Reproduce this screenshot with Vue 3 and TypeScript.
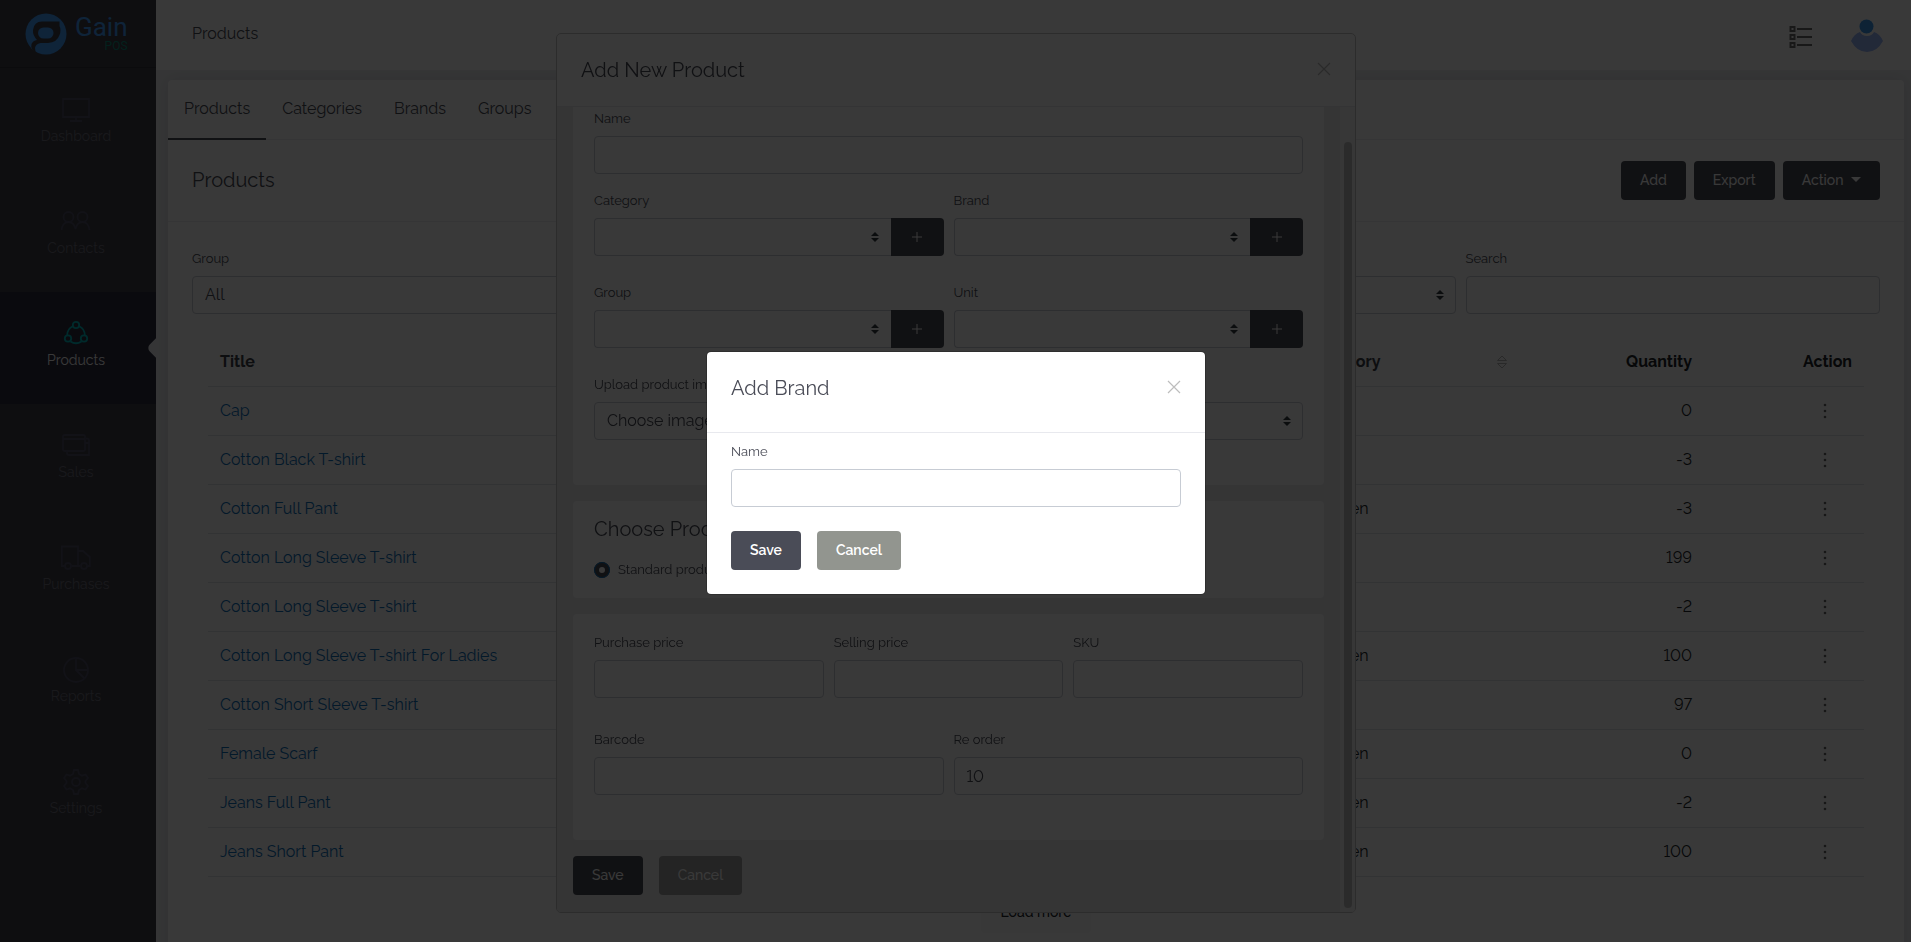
<script setup lang="ts">
import { ref } from 'vue'

interface Product { title: string; category: string; quantity: number }

const navItems = ['Dashboard', 'Contacts', 'Products', 'Sales', 'Purchases', 'Reports', 'Settings']
const activeNav = ref('Products')
const tabs = ['Products', 'Categories', 'Brands', 'Groups']
const activeTab = ref('Products')

const filters = [
  { id: 'f-group', label: 'Group' },
  { id: 'f-brand', label: 'Brand' },
  { id: 'f-category', label: 'Category' },
]

const products: Product[] = [
  { title: 'Cap', category: 'Men', quantity: 0 },
  { title: 'Cotton Black T-shirt', category: 'Men', quantity: -3 },
  { title: 'Cotton Full Pant', category: 'Women', quantity: -3 },
  { title: 'Cotton Long Sleeve T-shirt', category: 'Men', quantity: 199 },
  { title: 'Cotton Long Sleeve T-shirt', category: 'Men', quantity: -2 },
  { title: 'Cotton Long Sleeve T-shirt For Ladies', category: 'Women', quantity: 100 },
  { title: 'Cotton Short Sleeve T-shirt', category: 'Men', quantity: 97 },
  { title: 'Female Scarf', category: 'Women', quantity: 0 },
  { title: 'Jeans Full Pant', category: 'Women', quantity: -2 },
  { title: 'Jeans Short Pant', category: 'Women', quantity: 100 },
]

const addableSelects = ['Category', 'Brand', 'Group', 'Unit']
const priceFields = ['Purchase price', 'Selling price', 'SKU']
const brandName = ref('')
const reorder = ref('10')
const productType = ref('standard')
</script>

<template>
  <div class="app">
    <aside class="sidebar">
      <a class="logo" href="#" aria-label="Gain POS">
        <svg class="logo-mark" viewBox="0 0 42 42" aria-hidden="true">
          <circle cx="21" cy="21" r="20.5" class="logo-disc" />
          <path class="logo-cut" d="M12 41 Q5 36 6.500 31 Q8 27.500 12 27 Q7.500 22 8 17 Q9 8.500 17 8.500 H34.500 V13 Q36.500 17 34.500 22 Q32 29.500 23 30 H15.500 Q10.500 31 10 35 Q10 39 12 41Z" />
          <rect x="13" y="14.500" width="15.500" height="11" rx="5.500" class="logo-disc" />
        </svg>
        <span class="logo-text"><span class="logo-gain">Gain</span><span class="logo-pos">POS</span></span>
      </a>
      <nav class="nav">
        <a v-for="item in navItems" :key="item" href="#" class="nav-item" :class="{ active: item === activeNav }" @click.prevent="activeNav = item">
          <svg class="nav-icon" viewBox="0 0 30 28" aria-hidden="true">
            <template v-if="item === 'Dashboard'">
              <path d="M2 4H28V22H2ZM15 22V26M9 26H21" />
            </template>
            <template v-else-if="item === 'Contacts'">
              <circle cx="7.500" cy="10" r="5" /><circle cx="21.500" cy="10" r="5" />
              <path d="M0.500 23C1 18 4 15 7.500 15S13.500 18 14.500 22C15.500 18 18 15 21.500 15S28 18 28.500 23" />
            </template>
            <template v-else-if="item === 'Products'">
              <circle cx="15" cy="6" r="3.200" /><circle cx="7" cy="19.500" r="3.200" /><circle cx="23" cy="19.500" r="3.200" />
              <path d="M11.800 7.200A10 10 0 0 0 6.200 16.300M18.200 7.200A10 10 0 0 1 23.800 16.300M9.500 22.500Q15 26 20.500 22.500" />
            </template>
            <template v-else-if="item === 'Sales'">
              <rect x="2" y="4" width="22" height="16" rx="1.500" /><path d="M2 8H24M6 20V22Q6 24 8 24H28V9Q28 7.500 25 7.500M24 12H28" />
            </template>
            <template v-else-if="item === 'Purchases'">
              <path d="M4 23H0.800V3.500H17V23M10.500 23H19.500M17 8H22L28.800 14V23H26" /><circle cx="7" cy="23" r="3" /><circle cx="23" cy="23" r="3" />
            </template>
            <template v-else-if="item === 'Reports'">
              <circle cx="15" cy="15" r="12" /><path d="M15 3V15H27M15 15L23.500 23.500" />
            </template>
            <template v-else>
              <circle cx="15" cy="15" r="4" />
              <path d="M13 3H17L18 7L21 8.700L24.500 7.500L27 11L24.500 14V16L27 19L24.500 22.500L21 21.300L18 23L17 27H13L12 23L9 21.300L5.500 22.500L3 19L5.500 16V14L3 11L5.500 7.500L9 8.700L12 7Z" />
            </template>
          </svg>
          <span>{{ item }}</span>
        </a>
      </nav>
    </aside>

    <div class="main">
      <header class="topbar">
        <span class="crumb">Products</span>
        <div class="topbar-icons">
          <svg class="list-icon" viewBox="0 0 24 24" aria-hidden="true">
            <path d="M1.500 2H5.500V6H1.500ZM1.500 10H5.500V14H1.500ZM1.500 18H5.500V22H1.500ZM8 4H23M8 12H23M8 20H23" />
          </svg>
          <svg class="avatar" viewBox="0 0 34 34" aria-hidden="true">
            <path class="avatar-body" d="M1 23Q4 16 10 14Q12 18 17 18T24 14Q30 16 33 23Q27 34 17 34T1 23Z" />
            <circle class="avatar-head" cx="16.500" cy="8.500" r="7" />
          </svg>
        </div>
      </header>

      <section class="card">
        <div class="tabs">
          <button v-for="tab in tabs" :key="tab" type="button" class="tab" :class="{ active: tab === activeTab }" @click="activeTab = tab">{{ tab }}</button>
        </div>
        <div class="card-head">
          <h1 class="heading">Products</h1>
          <div class="head-actions">
            <button type="button" class="btn dark">Add</button>
            <button type="button" class="btn dark">Export</button>
            <button type="button" class="btn dark">Action <span class="caret"></span></button>
          </div>
        </div>
        <div class="card-body">
          <div class="row four">
            <div v-for="f in filters" :key="f.id" class="field">
              <label :for="f.id">{{ f.label }}</label>
              <div class="select">
                <select :id="f.id"><option>All</option></select>
                <svg class="updown" viewBox="0 0 8 10" aria-hidden="true"><path d="M4 0L8 4H0ZM0 6H8L4 10Z" /></svg>
              </div>
            </div>
            <div class="field">
              <label for="f-search">Search</label>
              <input id="f-search" type="text" />
            </div>
          </div>

          <div class="table-wrap">
            <table>
              <colgroup><col /><col class="c-cat" /><col class="c-sort" /><col class="c-num" /><col class="c-act" /></colgroup>
              <thead>
                <tr>
                  <th>Title</th>
                  <th>Category</th>
                  <th class="sort-cell">
                    <svg class="sort-icon" viewBox="0 0 10 14" aria-hidden="true"><path d="M5 1L9.500 5.500H0.500ZM0.500 8.500H9.500L5 13Z" /></svg>
                  </th>
                  <th class="num">Quantity</th>
                  <th class="num">Action</th>
                </tr>
              </thead>
              <tbody>
                <tr v-for="(p, i) in products" :key="i">
                  <td><a href="#">{{ p.title }}</a></td>
                  <td>{{ p.category }}</td>
                  <td></td>
                  <td class="num">{{ p.quantity }}</td>
                  <td class="act">
                    <button type="button" class="dots" aria-label="Row actions">
                      <svg viewBox="0 0 4 16" aria-hidden="true"><circle cx="2" cy="2" r="1.300" /><circle cx="2" cy="8" r="1.300" /><circle cx="2" cy="14" r="1.300" /></svg>
                    </button>
                  </td>
                </tr>
              </tbody>
            </table>
          </div>
          <div class="more"><button type="button" class="btn light">Load more</button></div>
        </div>
      </section>
    </div>

    <div class="layer">
      <section class="modal product-modal" aria-labelledby="product-title">
        <header class="modal-head">
          <h2 id="product-title" class="heading">Add New Product</h2>
          <button type="button" class="close" aria-label="Close"><svg viewBox="0 0 14 14"><path d="M1 1L13 13M13 1L1 13" /></svg></button>
        </header>
        <div class="product-body">
          <form class="product-form" @submit.prevent>
            <div class="panel first">
              <div class="field wide">
                <label for="p-name">Name</label>
                <input id="p-name" type="text" />
              </div>
              <div class="row two">
                <div v-for="name in addableSelects" :key="name" class="field">
                  <label :for="'p-' + name">{{ name }}</label>
                  <div class="group">
                    <div class="select">
                      <select :id="'p-' + name"></select>
                      <svg class="updown" viewBox="0 0 8 10" aria-hidden="true"><path d="M4 0L8 4H0ZM0 6H8L4 10Z" /></svg>
                    </div>
                    <button type="button" class="plus" :aria-label="'Add ' + name"><svg viewBox="0 0 10 10"><path d="M5 0V10M0 5H10" /></svg></button>
                  </div>
                </div>
              </div>
              <div class="field">
                <label for="p-image">Upload product image</label>
                <div class="select">
                  <select id="p-image"><option>Choose image</option></select>
                  <svg class="updown" viewBox="0 0 8 10" aria-hidden="true"><path d="M4 0L8 4H0ZM0 6H8L4 10Z" /></svg>
                </div>
              </div>
            </div>
            <div class="panel type">
              <h3 class="heading">Choose Product Type</h3>
              <label class="radio"><input v-model="productType" type="radio" name="type" value="standard" /> Standard product</label>
            </div>
            <div class="panel prices">
              <div class="row three">
                <div v-for="name in priceFields" :key="name" class="field">
                  <label :for="'p-' + name">{{ name }}</label>
                  <input :id="'p-' + name" type="text" />
                </div>
              </div>
              <div class="row two">
                <div class="field">
                  <label for="p-barcode">Barcode</label>
                  <input id="p-barcode" type="text" />
                </div>
                <div class="field">
                  <label for="p-reorder">Re order</label>
                  <input id="p-reorder" v-model="reorder" type="text" />
                </div>
              </div>
            </div>
            <div class="buttons">
              <button type="submit" class="btn dark">Save</button>
              <button type="button" class="btn muted">Cancel</button>
            </div>
          </form>
          <div class="scrollbar" aria-hidden="true"><div class="thumb"></div></div>
        </div>
      </section>
    </div>

    <div class="layer shade">
      <section class="modal brand-modal" role="dialog" aria-labelledby="brand-title">
        <header class="modal-head">
          <h2 id="brand-title" class="heading">Add Brand</h2>
          <button type="button" class="close" aria-label="Close"><svg viewBox="0 0 14 14"><path d="M1 1L13 13M13 1L1 13" /></svg></button>
        </header>
        <form class="brand-body" @submit.prevent>
          <div class="field">
            <label for="brand-name">Name</label>
            <input id="brand-name" v-model="brandName" type="text" />
          </div>
          <div class="buttons">
            <button type="submit" class="btn dark">Save</button>
            <button type="button" class="btn grey">Cancel</button>
          </div>
        </form>
      </section>
    </div>
  </div>
</template>

<style>
body { margin: 0; overflow: hidden; }
</style>

<style scoped>
* { box-sizing: border-box; }
.app {
  display: flex;
  height: 100vh;
  overflow: hidden;
  background: #ecedf1;
  color: #4a4c57;
  font-family: Raleway, Lato, "Noto Sans", sans-serif;
  font-size: 16px;
  line-height: 24px;
  font-variant-numeric: lining-nums;
}
a { text-decoration: none; }
button, input, select { font: inherit; font-variant-numeric: lining-nums; color: inherit; }
button { border: 0; padding: 0; background: none; cursor: pointer; }

.sidebar { flex: none; width: 156px; background: #404048; }
.logo { display: flex; align-items: center; gap: 8px; height: 68px; padding-left: 25px; border-bottom: 1px solid #33333b; }
.logo-mark { width: 42px; height: 42px; }
.logo-disc { fill: #439fff; }
.logo-cut { fill: #404048; }
.logo-text { display: flex; flex-direction: column; align-items: flex-end; padding-bottom: 2px; font-family: Roboto, sans-serif; }
.logo-gain { font-size: 26px; line-height: 26px; color: #439fff; }
.logo-pos { font-size: 12px; line-height: 12px; color: #0f9080; }
.nav-item { position: relative; display: flex; flex-direction: column; align-items: center; height: 112px; padding: 27px 4px 0 0; overflow: hidden; color: #70707f; font-size: 14px; }
.nav-item span { padding-top: 1px; }
.nav-icon { width: 30px; height: 28px; fill: none; stroke: #505068; stroke-width: 1.8; }
.nav-item.active { background: #2e2d42; color: #fff; }
.nav-item.active .nav-icon { stroke: #00bcc0; }
.nav-item.active::after { content: ""; position: absolute; top: 47px; right: -12px; width: 18px; height: 18px; border-radius: 5px; background: #ecedf1; transform: rotate(45deg); }

.main { flex: 1; min-width: 0; }
.topbar { display: flex; justify-content: space-between; height: 70px; padding: 0 27px 0 36px; background: #fff; }
.crumb { padding-top: 22px; }
.topbar-icons { display: flex; align-items: flex-start; gap: 37px; padding-top: 18px; }
.list-icon { width: 24px; height: 24px; margin-top: 7px; fill: none; stroke: #6c6c6c; stroke-width: 2; }
.avatar { width: 34px; height: 34px; }
.avatar-head { fill: #3a98ee; }
.avatar-body { fill: #9ab6f8; }

.card { margin: 10px 7px 0 12px; height: 900px; background: #fff; border-radius: 4px; box-shadow: 0 0 16px rgba(0, 0, 0, 0.09); }
.tabs { display: flex; height: 60px; border-bottom: 1px solid #eaeaf0; }
.tab { height: 60px; padding: 0 16px; border-bottom: 2px solid transparent; }
.tab.active { border-color: #4a4c57; }
.heading { margin: 0; font-size: 20px; line-height: 24px; font-weight: 400; }
.card-head { display: flex; justify-content: space-between; align-items: center; height: 82px; padding: 0 24px; border-bottom: 1px solid #eaeaf0; }
.card-head .heading { padding-bottom: 2px; }
.head-actions { display: flex; gap: 8px; }
.card-body { padding: 26px 24px 0; }

.btn { height: 39px; padding: 0 19px 2px; border-radius: 4px; font-size: 14px; line-height: 20px; font-weight: 500; color: #fff; }
.btn.dark { background: #4a4c57; }
.btn.grey { background: #92958f; }
.btn.muted { background: #9f9f9f; }
.btn.light { background: #f8f9fa; color: #212529; }
.brand-body .btn { font-weight: 600; }
.caret { display: inline-block; margin-left: 4px; vertical-align: 3px; border: 5px solid transparent; border-top-color: #fff; border-bottom: 0; }

.row { display: grid; column-gap: 10px; }
.four { grid-template-columns: repeat(4, minmax(0, 1fr)); }
.three { grid-template-columns: repeat(3, minmax(0, 1fr)); }
.two { grid-template-columns: repeat(2, minmax(0, 1fr)); }
.field { display: flex; flex-direction: column; gap: 6px; min-width: 0; font-size: 16px; }
.field label { font-size: 13px; line-height: 22px; }
.field input, .field select { display: block; width: 100%; height: 38px; padding: 0 12px; border: 1px solid #c7ccd4; border-radius: 4px; background: transparent; outline: none; appearance: none; }
.select { position: relative; flex: 1; }
.updown { position: absolute; top: 14px; right: 12px; width: 8px; height: 10px; fill: #343a40; pointer-events: none; }
.group { display: flex; }
.group select { border-right: 0; border-radius: 4px 0 0 4px; }
.plus { width: 53px; height: 38px; border-radius: 0 4px 4px 0; background: #4a4c57; }
.plus svg { width: 10px; height: 10px; stroke: #fff; stroke-width: 1; }

.table-wrap { padding: 22px 16px 0; }
table { width: 100%; table-layout: fixed; border-collapse: collapse; color: #212529; }
th, td { height: 49px; padding: 0 12px; border-bottom: 1px solid #dee2e6; text-align: left; }
th { height: 50px; padding-top: 2px; font-weight: 700; color: #3c3e47; }
th.num { color: #212529; }
td a { color: #0f72bb; }
.num { text-align: right; }
.c-cat { width: 199px; }
.c-sort { width: 48px; }
.c-num { width: 159px; }
.c-act { width: 160px; }
.sort-cell { padding-left: 0; }
.sort-icon { display: block; width: 10px; height: 14px; fill: none; stroke: #b5b5b5; }
.act { text-align: right; padding-right: 37px; }
.dots { height: 16px; vertical-align: middle; }
.dots svg { display: block; width: 4px; height: 16px; fill: #666; }
.more { display: flex; justify-content: center; padding-top: 17px; }

.layer { position: fixed; inset: 0; display: flex; justify-content: center; align-items: flex-start; padding: 33px 0 0 1px; }
.shade { align-items: center; padding-top: 4px; background: rgba(0, 0, 0, 0.776); }
.modal { background: #fff; background-clip: padding-box; border: 1px solid #c4c4c4; border-radius: 5px; overflow: hidden; }
.modal-head { display: flex; justify-content: space-between; padding: 24px; border-bottom: 1px solid #e8e9ee; }
.close { width: 14px; height: 14px; margin-top: 4px; }
.close svg { display: block; width: 14px; height: 14px; fill: none; stroke: #bdbdbd; stroke-width: 1.2; }
.product-modal { width: 800px; }
.product-body { display: flex; background: #ecedee; }
.product-form { flex: 1; min-width: 0; padding: 0 16px; }
.panel { margin-bottom: 16px; padding: 0 21px; background: #fff; border-radius: 4px; }
.panel.first { padding-top: 1px; padding-bottom: 45px; border-radius: 0 0 4px 4px; }
.first .wide { margin-bottom: 16px; }
.first .row { row-gap: 26px; margin-bottom: 26px; }
.panel.type { padding-top: 16px; padding-bottom: 18px; }
.radio { display: flex; align-items: center; gap: 8px; margin-top: 19px; font-size: 13px; line-height: 20px; }
.radio input { width: 16px; height: 16px; margin: 0; appearance: none; border: 5px solid #4a4c57; border-radius: 50%; outline: 1px solid #0f72bb; outline-offset: -1px; }
.panel.prices { padding-top: 18px; padding-bottom: 45px; }
.prices .three { margin-bottom: 31px; }
.buttons { display: flex; gap: 16px; }
.product-form .buttons { padding-bottom: 17px; }
.scrollbar { width: 15px; padding: 35px 3px 4px 4px; background: #f3f3f3; }
.thumb { height: 100%; border-radius: 4px; background: #c2c2c2; }

.brand-modal { width: 500px; border-color: rgba(0, 0, 0, 0.2); }
.brand-modal .modal-head { padding-bottom: 32px; }
.brand-body { padding: 8px 24px 24px; }
.brand-body .buttons { margin-top: 24px; }
</style>
